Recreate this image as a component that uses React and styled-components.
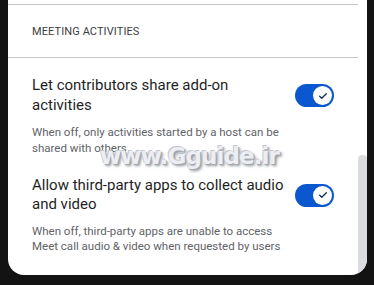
import styled, { createGlobalStyle } from 'styled-components'

const GlobalStyle = createGlobalStyle`
  html, body {
    margin: 0;
    padding: 0;
    background: #131314;
    overflow: hidden;
  }
  * {
    box-sizing: border-box;
  }
`

const Screen = styled.div`
  position: relative;
  width: 374px;
  height: 285px;
  padding-left: 8px;
  font-family: Roboto, 'Noto Sans', sans-serif;
`

const Panel = styled.div`
  display: flex;
  width: 359px;
  height: 275px;
  background: #fff;
  border-radius: 0 0 16px 16px;
  overflow: hidden;
`

const Content = styled.div`
  flex: 1;
  padding-top: 4px;
`

const Divider = styled.div`
  height: 1px;
  background: #c7c7c7;
`

const SectionHeader = styled.div`
  height: 52px;
  display: flex;
  align-items: center;
  padding-left: 24px;
  font-size: 11px;
  color: #3c4043;
  text-transform: uppercase;
  letter-spacing: 0.1px;
`

const Setting = styled.div`
  padding: ${({ $top }) => $top}px 24px 0 24px;
`

const TitleRow = styled.div`
  display: flex;
  align-items: center;
  justify-content: space-between;
`

const Title = styled.div`
  width: 258px;
  font-size: 15px;
  line-height: 19.5px;
  color: #1f1f1f;
`

const Description = styled.div`
  width: 258px;
  margin-top: ${({ $gap }) => $gap}px;
  font-size: 11.5px;
  line-height: 15.75px;
  color: #5f6368;
`

const Toggle = styled.div`
  width: 39px;
  height: 23px;
  border-radius: 12px;
  background: #0b57d0;
  display: flex;
  align-items: center;
  justify-content: flex-end;
  padding-right: 2px;
`

const Knob = styled.div`
  width: 19px;
  height: 19px;
  border-radius: 50%;
  background: #fff;
  display: flex;
  align-items: center;
  justify-content: center;
`

const ScrollTrack = styled.div`
  width: 9px;
  padding-top: 155px;
  display: flex;
`

const ScrollThumb = styled.div`
  flex: 1;
  background: #dadce0;
  border-radius: 4px 4px 0 0;
`

const Watermark = styled.div`
  position: absolute;
  left: 100px;
  top: 143px;
  font-family: 'DejaVu Sans', sans-serif;
  font-weight: bold;
  font-size: 23px;
  letter-spacing: -0.9px;
  color: #eceef3;
  text-shadow: 1px 1px 0 #a3a8ae, -1px -1px 0 #c2c6cc, 2px 2px 3px #8a9096;
  pointer-events: none;
`

const Check = () => (
  <svg width="10" height="10" viewBox="0 0 24 24" fill="none">
    <path d="M4 12.5l5 5L20 6.5" stroke="#0a2a5c" strokeWidth="3" strokeLinecap="round" strokeLinejoin="round" />
  </svg>
)

const settings = [
  {
    title: 'Let contributors share add-on activities',
    description: 'When off, only activities started by a host can be shared with others',
    top: 18,
    gap: 10,
  },
  {
    title: 'Allow third-party apps to collect audio and video',
    description: 'When off, third-party apps are unable to access Meet call audio & video when requested by users',
    top: 19,
    gap: 9,
  },
]

export default function App() {
  return (
    <Screen>
      <GlobalStyle />
      <Panel>
        <Content>
          <Divider />
          <SectionHeader>Meeting activities</SectionHeader>
          <Divider />
          {settings.map((s) => (
            <Setting key={s.title} $top={s.top}>
              <TitleRow>
                <Title>{s.title}</Title>
                <Toggle>
                  <Knob>
                    <Check />
                  </Knob>
                </Toggle>
              </TitleRow>
              <Description $gap={s.gap}>{s.description}</Description>
            </Setting>
          ))}
        </Content>
        <ScrollTrack>
          <ScrollThumb />
        </ScrollTrack>
      </Panel>
      <Watermark>www.Gguide.ir</Watermark>
    </Screen>
  )
}
